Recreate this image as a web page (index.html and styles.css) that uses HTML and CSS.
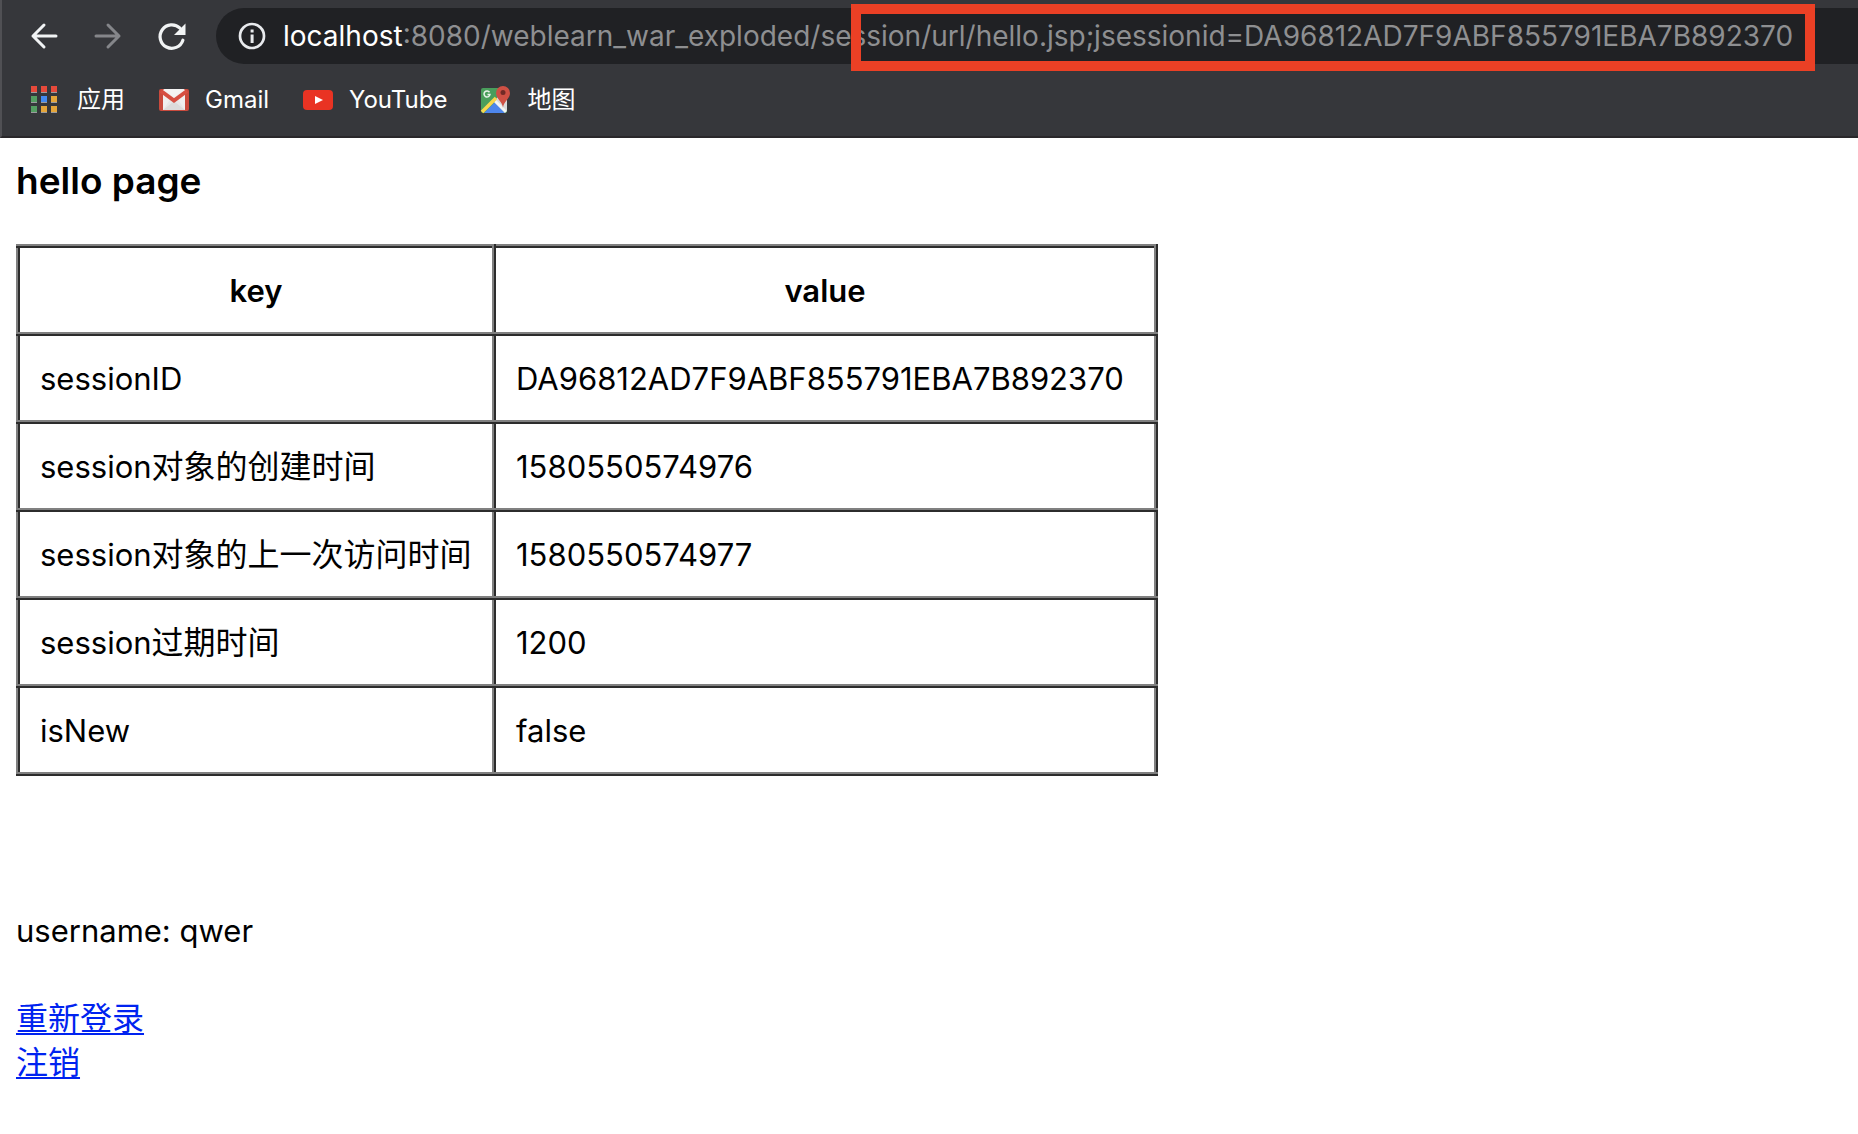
FILE: index.html
```
<!DOCTYPE html>
<html lang="zh-CN">
<head>
<meta charset="utf-8">
<title>hello page</title>
<link rel="stylesheet" href="styles.css">
</head>
<body>
<header class="browser">
  <div class="toolbar">
    <button class="nav" type="button" aria-label="Back">
      <svg viewBox="0 0 32 32" fill="none" stroke="#f1f3f4" stroke-width="3" stroke-linecap="round" stroke-linejoin="round"><path d="M28 16H5M16 5L5 16l11 11"/></svg>
    </button>
    <button class="nav" type="button" aria-label="Forward" disabled>
      <svg viewBox="0 0 32 32" fill="none" stroke="#85868a" stroke-width="3" stroke-linecap="round" stroke-linejoin="round"><path d="M4 16h23M16 5l11 11-11 11"/></svg>
    </button>
    <button class="nav" type="button" aria-label="Reload">
      <svg viewBox="0 0 32 32"><path d="M26.9 20.2A11.7 11.7 0 1 1 24 8.2" fill="none" stroke="#f1f3f4" stroke-width="3.2" stroke-linecap="round"/><path d="M29.500 3.500V15H18Z" fill="#f1f3f4"/></svg>
    </button>
    <div class="address">
      <svg class="info" viewBox="0 0 28 28"><circle cx="14" cy="14" r="12" fill="none" stroke="#e8eaed" stroke-width="2.700"/><path d="M12.600 7.600h3v3h-3zM12.600 12.600h3V21h-3z" fill="#e8eaed"/></svg>
      <label class="host" for="url">localhost</label>
      <input class="path" id="url" type="text" spellcheck="false" value=":8080/weblearn_war_exploded/session/url/hello.jsp;jsessionid=DA96812AD7F9ABF855791EBA7B892370">
    </div>
  </div>
  <nav class="bookmarks">
    <a class="bookmark" href="#apps">
      <svg viewBox="0 0 32 32">
        <g fill="#9b9b9e"><path d="M2 8h6v1H2zM12 8h6v1h-6zM22 8h6v1h-6zM2 18h6v1H2zM12 18h6v1h-6zM22 18h6v1h-6zM2 28h6v1H2zM12 28h6v1h-6zM22 28h6v1h-6z"/></g>
        <path fill="#e64a3b" d="M2 2h6v6H2zM12 2h6v6h-6zM22 2h6v6h-6z"/>
        <path fill="#549e62" d="M2 12h6v6H2zM2 22h6v6H2z"/>
        <path fill="#438af0" d="M12 12h6v6h-6z"/>
        <path fill="#e5a53a" d="M22 12h6v6h-6zM12 22h6v6h-6zM22 22h6v6h-6z"/>
      </svg>
      应用
    </a>
    <a class="bookmark" href="#gmail">
      <svg viewBox="0 0 32 32">
        <rect x="2" y="5" width="30" height="22" rx="2" fill="#c94a3d"/>
        <path fill="#f0efef" d="M6 6h22v20H6z"/>
        <path fill="#dcdbdb" d="M6 26L17 16l11 10z"/>
        <path fill="#e8e7e7" d="M6 26l8-12 3 3zM28 26l-8-12-3 3z"/>
        <path fill="none" stroke="#d64f42" stroke-width="4" d="M4 7l13 9.500L30 7"/>
        <path fill="#f4f3f3" d="M6 5h22l-11 8z"/>
      </svg>
      Gmail
    </a>
    <a class="bookmark" href="#youtube">
      <svg viewBox="0 0 32 32"><rect x="2" y="6" width="30" height="20" rx="4" fill="#e93323"/><path fill="#fff" d="M14 12l8 4-8 4z"/></svg>
      YouTube
    </a>
    <a class="bookmark" href="#maps">
      <svg viewBox="0 0 32 32">
        <rect x="2" y="4" width="26" height="25" rx="2" fill="#4a9e5c"/>
        <path fill="#d9dadb" d="M15 17l9-9h4v19z"/>
        <path fill="#4e86ec" d="M5 29l11-11 10 11z"/>
        <path fill="none" stroke="#f4f4f4" stroke-width="3" d="M16 17l11 11"/>
        <path fill="none" stroke="#f8d64e" stroke-width="3.500" d="M3 28l14-14"/>
        <path fill="none" stroke="#e9f3eb" stroke-width="1.500" d="M10.500 8.300A3 3 0 1 0 11 10.500H8.500"/>
        <path fill="#cf5044" d="M24 24c0-6-7-9-7-15a7 7 0 0 1 14 0c0 6-7 9-7 15z"/>
        <circle cx="24" cy="8.500" r="2.500" fill="#722a26"/>
      </svg>
      地图
    </a>
  </nav>
  <div class="highlight"></div>
</header>
<main class="page">
  <h3 class="title">hello page</h3>
  <table class="session">
    <thead>
      <tr><th class="key" scope="col">key</th><th class="value" scope="col">value</th></tr>
    </thead>
    <tbody>
      <tr><td>sessionID</td><td>DA96812AD7F9ABF855791EBA7B892370</td></tr>
      <tr><td>session<span class="han">对象的创建时间</span></td><td>1580550574976</td></tr>
      <tr><td>session<span class="han">对象的上一次访问时间</span></td><td>1580550574977</td></tr>
      <tr><td>session<span class="han">过期时间</span></td><td>1200</td></tr>
      <tr><td>isNew</td><td>false</td></tr>
    </tbody>
  </table>
  <p class="user">username: qwer</p>
  <nav class="links">
    <a class="han" href="#login">重新登录</a>
    <a class="han" href="#logout">注销</a>
  </nav>
</main>
</body>
</html>
```
FILE: styles.css
```
* {
  box-sizing: border-box;
}

body {
  margin: 0;
  background: #fff;
  color: #000;
  font: 31px/44px Inter, "Noto Sans CJK SC", sans-serif;
}

.browser {
  position: relative;
  padding-top: 8px;
  overflow: hidden;
  background: #36373b;
  border-left: 2px solid #505054;
  border-bottom: 2px solid #29272a;
}

.toolbar {
  display: flex;
  align-items: center;
  gap: 32px;
  padding-left: 26px;
}

.nav {
  flex: none;
  width: 32px;
  height: 32px;
  padding: 0;
  border: 0;
  background: none;
}

.nav svg {
  display: block;
}

.address {
  flex: 1;
  display: flex;
  align-items: center;
  min-width: 0;
  height: 56px;
  margin-left: -4px;
  padding-left: 22px;
  border-radius: 28px 0 0 28px;
  background: #202124;
  font-size: 28px;
}

.info {
  flex: none;
  width: 28px;
  height: 28px;
  margin-right: 17px;
}

.host {
  color: #fff;
}

.path {
  flex: 1;
  min-width: 0;
  height: 44px;
  padding: 0;
  border: 0;
  outline: 0;
  background: none;
  color: #8e8f91;
  font: inherit;
}

.bookmarks {
  display: flex;
  align-items: center;
  gap: 32px;
  height: 72px;
  padding: 0 27px;
  font-size: 24px;
}

.bookmark {
  display: flex;
  align-items: center;
  gap: 16px;
  color: #fff;
  text-decoration: none;
}

.bookmark svg {
  width: 32px;
  height: 32px;
}

.highlight {
  position: absolute;
  top: 4px;
  left: 849px;
  width: 964px;
  height: 67px;
  border: 10px solid #eb4025;
}

.page {
  padding: 17px 16px;
}

.title {
  margin: 0 0 37px;
  font-size: 37px;
  line-height: 52px;
  font-weight: 600;
}

.session {
  border-collapse: collapse;
  border: 4px ridge #808080;
}

.session th,
.session td {
  height: 88px;
  padding: 2px 20px 0;
  border: 4px ridge #808080;
  white-space: nowrap;
}

.session th {
  font-weight: 600;
}

.key {
  width: 476px;
}

.value {
  width: 662px;
}

.han {
  font-size: 32px;
  line-height: 40px;
}

.user {
  margin: 133px 0 46px;
}

.links {
  display: flex;
  flex-direction: column;
  align-items: flex-start;
  gap: 4px;
}

.links a {
  color: #0023f0;
  text-decoration-thickness: 2px;
  text-underline-offset: 3px;
}
```
